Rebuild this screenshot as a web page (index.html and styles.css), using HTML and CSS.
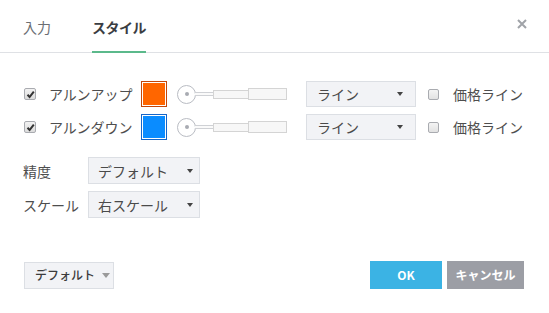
FILE: index.html
```html
<!DOCTYPE html>
<html lang="ja">
<head>
<meta charset="utf-8">
<link rel="stylesheet" href="styles.css">
</head>
<body>
<div class="dialog">
  <div class="header">
    <div class="tabs">
      <div class="tab">入力</div>
      <div class="tab active">スタイル</div>
    </div>
    <svg class="close" width="10" height="10" viewBox="0 0 10 10"><path d="M1 1L9 9M9 1L1 9" stroke="#a0a3a8" stroke-width="2"/></svg>
  </div>
  <div class="body">
    <div class="lines">
      <div class="row">
        <span class="cb checked"><svg width="9" height="9" viewBox="0 0 9 9"><path d="M1.5 4.8L3.6 7L7.8 1.6" fill="none" stroke="#333" stroke-width="2"/></svg></span>
        <span class="lbl">アルンアップ</span>
        <span class="swatch orange"></span>
        <span class="slider"><span class="knob"></span><span class="conn"></span><span class="seg1"></span><span class="seg2"></span></span>
        <span class="select wide"><span>ライン</span><i class="arrow"></i></span>
        <span class="cb small"></span>
        <span class="lbl2">価格ライン</span>
      </div>
      <div class="row">
        <span class="cb checked"><svg width="9" height="9" viewBox="0 0 9 9"><path d="M1.5 4.8L3.6 7L7.8 1.6" fill="none" stroke="#333" stroke-width="2"/></svg></span>
        <span class="lbl">アルンダウン</span>
        <span class="swatch blue"></span>
        <span class="slider"><span class="knob"></span><span class="conn"></span><span class="seg1"></span><span class="seg2"></span></span>
        <span class="select wide"><span>ライン</span><i class="arrow"></i></span>
        <span class="cb small"></span>
        <span class="lbl2">価格ライン</span>
      </div>
    </div>
    <div class="opts">
      <div class="opt">
        <span class="olbl">精度</span>
        <span class="select mid"><span>デフォルト</span><i class="arrow"></i></span>
      </div>
      <div class="opt">
        <span class="olbl">スケール</span>
        <span class="select mid"><span>右スケール</span><i class="arrow"></i></span>
      </div>
    </div>
  </div>
  <div class="footer">
    <span class="defbtn">デフォルト<i class="arrow grey"></i></span>
    <div class="actions">
      <span class="btn ok">OK</span>
      <span class="btn cancel">キャンセル</span>
    </div>
  </div>
</div>
</body>
</html>
```
FILE: styles.css
```css
* { box-sizing: border-box; }
html, body { margin: 0; padding: 0; background: #fff; }
body {
  font-family: "Noto Sans CJK JP", "Noto Sans", sans-serif;
  color: #4a4a4a;
  font-size: 14px;
}
.dialog { width: 549px; height: 313px; position: relative; }
.header {
  height: 53px;
  border-bottom: 1px solid #dfe1e5;
  display: flex;
  align-items: stretch;
  justify-content: space-between;
  padding-left: 23px;
  padding-right: 22px;
}
.tabs { display: flex; gap: 41px; }
.tab {
  display: flex;
  align-items: center;
  font-size: 14px;
  line-height: 16px;
  color: #6b6e73;
  padding-top: 2px;
  border-bottom: 2px solid transparent;
  margin-bottom: -1px;
}
.tab.active {
  color: #3a3d42;
  font-weight: bold;
  letter-spacing: -0.5px;
  border-bottom-color: #5bb98b;
}
.close { align-self: flex-start; margin-top: 19px; }
.body { padding: 28px 0 0 24px; }
.lines { display: flex; flex-direction: column; gap: 7px; }
.row { display: flex; align-items: center; height: 26px; }
.cb {
  width: 12px; height: 12px;
  border: 1px solid #a9abb0;
  border-radius: 2px;
  background: linear-gradient(#f2f2f2, #dcdcdc);
  display: flex; align-items: center; justify-content: center;
}
.cb.small { width: 11px; height: 11px; margin-left: 12px; background: linear-gradient(#f4f4f4, #e2e2e2); }
.lbl { margin-left: 13px; width: 92px; line-height: 16px; color: #4e4e4e; }
.lbl2 { margin-left: 14px; line-height: 16px; color: #4e4e4e; }
.swatch {
  width: 26px; height: 26px;
  border: 1px solid;
  box-shadow: inset 0 0 0 1px #fff;
}
.swatch.orange { background: #ff6600; border-color: #c3470b; }
.swatch.blue { background: #0a8cff; border-color: #1565c8; }
.slider {
  margin-left: 10px;
  width: 110px;
  height: 20px;
  display: flex;
  align-items: center;
}
.knob {
  width: 19px; height: 19px;
  border: 1px solid #b9bcc3;
  border-radius: 50%;
  background: #fff;
  display: flex; align-items: center; justify-content: center;
  flex: none;
}
.knob::after { content: ""; width: 4px; height: 4px; border-radius: 50%; background: #a8abb2; }
.conn { width: 18px; height: 4px; border-top: 1px solid #cfd1d5; border-bottom: 1px solid #cfd1d5; background: #fafafa; margin-left: -1px; }
.seg1 { width: 36px; height: 9px; border: 1px solid #d4d4d4; background: #f7f7f7; }
.seg2 { width: 39px; height: 12px; border: 1px solid #d4d4d4; background: #f7f7f7; margin-left: -1px; }
.select {
  height: 26px;
  background: #f2f3f6;
  border: 1px solid #dcdfe4;
  display: flex;
  align-items: center;
  justify-content: space-between;
  padding: 0 12px 0 10px;
  line-height: 16px;
  color: #4a4a4a;
}
.select.wide { margin-left: 19px; width: 110px; }
.select.mid { width: 112px; height: 27px; padding-left: 9px; padding-right: 6px; }
.arrow {
  width: 0; height: 0;
  border-left: 3.5px solid transparent;
  border-right: 3.5px solid transparent;
  border-top: 4px solid #444;
}
.arrow.grey { border-top: 5px solid #9a9a9a; border-left-width: 4px; border-right-width: 4px; margin-left: 7px; }
.opts { display: flex; flex-direction: column; gap: 7px; margin-top: 17px; margin-left: -1px; }
.opt { display: flex; align-items: center; }
.olbl { width: 65px; line-height: 16px; color: #4e4e4e; }
.footer {
  display: flex;
  justify-content: space-between;
  align-items: center;
  padding: 0 25px 0 24px;
  margin-top: 43px;
}
.defbtn {
  width: 90px; height: 27px;
  background: #f2f3f6;
  border: 1px solid #dcdfe4;
  display: flex; align-items: center;
  padding-left: 10px;
  font-size: 12px;
  font-weight: 500;
  color: #3c3c3c;
  line-height: 14px;
}
.actions { display: flex; gap: 5px; }
.btn {
  height: 28px;
  display: flex; align-items: center; justify-content: center;
  color: #fff;
  font-weight: bold;
  font-size: 12px;
  line-height: 14px;
}
.btn.ok { width: 72px; background: #3bb3e4; }
.btn.cancel { width: 77px; background: #9c9ea5; }
```
